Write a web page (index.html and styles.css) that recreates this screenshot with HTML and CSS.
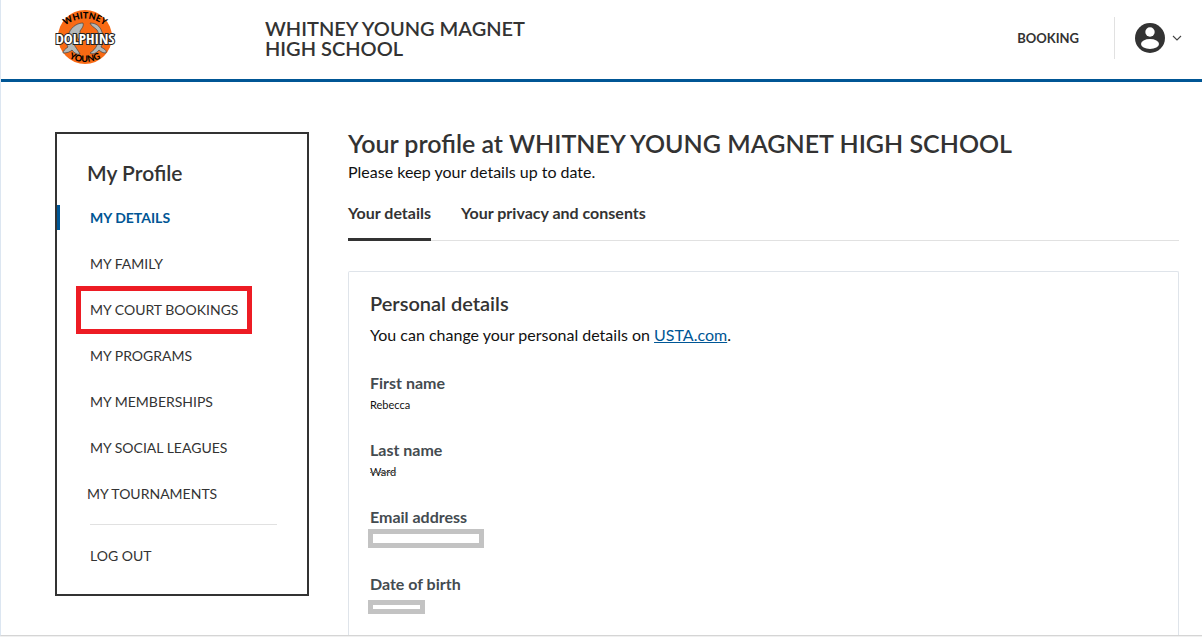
FILE: index.html
```
<!DOCTYPE html>
<html lang="en">
  <head>
    <meta charset="UTF-8" />
    <meta name="viewport" content="width=device-width, initial-scale=1.0" />
    <title>My Profile - Whitney Young Magnet High School</title>
    <link rel="stylesheet" href="styles.css">
  </head>
  <body>
    <div class="page">
      <header class="header">
        <a href="#" class="logo" aria-label="Home">
          <svg width="62" height="58" viewBox="0 0 62 58">
            <defs>
              <path id="arc-top" d="M9 18 Q31 1 53 18" />
              <path id="arc-bottom" d="M11 47 Q31 59 51 47" />
            </defs>
            <circle cx="31" cy="28" r="27" fill="#f96a14" />
            <path class="dolphin" d="M29 14 C24 14 18 17 15 24 C12 29 12 35 14 38 C11 40 9 42 9 44 C13 44 16 43 18 41 C20 44 24 46 26 45 C24 41 21 38 20 35 C20 30 21 27 23 25 C23 29 25 31 26 33 C27 29 26 26 26 22 C28 19 30 17 29 14 Z" />
            <path class="dolphin" d="M36 14 C42 14 46 17 48 23 C50 29 49 34 47 38 C50 40 53 41 52 44 C49 44 47 43 45 41 C43 44 38 46 36 44 C39 42 42 39 43 36 C46 30 45 24 43 21 C40 18 37 17 36 14 Z" />
            <text class="logo-small"><textPath href="#arc-top" startOffset="50%">WHITNEY</textPath></text>
            <text class="logo-name" x="31" y="35">DOLPHINS</text>
            <text class="logo-small"><textPath href="#arc-bottom" startOffset="50%">YOUNG</textPath></text>
          </svg>
        </a>
        <div class="club-name">WHITNEY YOUNG MAGNET HIGH SCHOOL</div>
        <nav class="header-nav">
          <a href="#" class="booking-link">BOOKING</a>
          <button type="button" class="user-menu" aria-label="Account menu">
            <svg width="30" height="30" viewBox="0 0 30 30">
              <circle cx="15" cy="15" r="15" fill="#333" />
              <circle cx="15" cy="9" r="4.7" fill="#fff" />
              <ellipse cx="15" cy="21" rx="9" ry="5" fill="#fff" />
            </svg>
            <svg width="10" height="6" viewBox="0 0 10 6">
              <path d="M1 1 L5 5 L9 1" fill="none" stroke="#444" stroke-width="1.1" />
            </svg>
          </button>
        </nav>
      </header>

      <div class="content">
        <aside class="sidebar">
          <h2 class="sidebar-title">My Profile</h2>
          <ul class="menu">
            <li class="active"><a href="#">MY DETAILS</a></li>
            <li><a href="#">MY FAMILY</a></li>
            <li><a href="#" class="highlight">MY COURT BOOKINGS</a></li>
            <li><a href="#">MY PROGRAMS</a></li>
            <li><a href="#">MY MEMBERSHIPS</a></li>
            <li><a href="#">MY SOCIAL LEAGUES</a></li>
            <li class="outdent"><a href="#">MY TOURNAMENTS</a></li>
          </ul>
          <div class="logout">
            <a href="#">LOG OUT</a>
          </div>
        </aside>

        <main class="main">
          <h1>Your profile at WHITNEY YOUNG MAGNET HIGH SCHOOL</h1>
          <p class="intro">Please keep your details up to date.</p>

          <nav class="tabs">
            <a href="#" class="tab current">Your details</a>
            <a href="#" class="tab">Your privacy and consents</a>
          </nav>

          <section class="card">
            <h3>Personal details</h3>
            <p class="card-text">You can change your personal details on <a href="#">USTA.com</a>.</p>
            <dl class="details">
              <div class="field">
                <dt>First name</dt>
                <dd>Rebecca</dd>
              </div>
              <div class="field">
                <dt>Last name</dt>
                <dd><s>Ward</s></dd>
              </div>
              <div class="field">
                <dt>Email address</dt>
                <dd><span class="redacted email"></span></dd>
              </div>
              <div class="field">
                <dt>Date of birth</dt>
                <dd><span class="redacted birth"></span></dd>
              </div>
            </dl>
          </section>
        </main>
      </div>
    </div>
  </body>
</html>
```
FILE: styles.css
```
:root {
  --dark: #333;
  --blue: #005695;
  --line: #e1e1e1;
  --card-line: #dfe4ea;
}

* {
  box-sizing: border-box;
}

body {
  margin: 0;
  background: #f0f0f0;
  font-family: Lato, "Open Sans", sans-serif;
  color: var(--dark);
}

h1,
h2,
h3,
p,
ul,
dl,
dd {
  margin: 0;
  padding: 0;
}

.page {
  min-height: calc(100vh - 1px);
  margin-bottom: 1px;
  background: #fff;
  border-left: 1px solid #dce6f1;
  border-bottom: 1px solid #d5d5d5;
}

.header {
  display: flex;
  align-items: center;
  height: 82px;
  padding: 0 20px 4px 53px;
  border-bottom: 3px solid var(--blue);
}

.logo {
  width: 211px;
}

.logo svg {
  display: block;
}

.logo-small {
  font: 900 9px Lato, sans-serif;
  text-anchor: middle;
}

.logo-name {
  font: 700 15px "Open Sans Condensed", "DejaVu Sans Condensed", sans-serif;
  fill: #fff;
  stroke: #222;
  stroke-width: 2px;
  paint-order: stroke;
  text-anchor: middle;
}

.dolphin {
  fill: #b3b8b8;
  stroke: #444;
  stroke-width: 0.7px;
}

.club-name {
  width: 280px;
  font-size: 20px;
  line-height: 20px;
  font-weight: 600;
}

.header-nav {
  display: flex;
  align-items: center;
  margin-left: auto;
}

.booking-link {
  margin-right: 35px;
  color: var(--dark);
  font-size: 13px;
  font-weight: 700;
  text-decoration: none;
}

.user-menu {
  display: flex;
  align-items: center;
  gap: 7px;
  height: 42px;
  padding: 0 0 0 20px;
  border: 0;
  border-left: 1px solid var(--line);
  background: none;
  cursor: pointer;
}

.content {
  display: flex;
  align-items: flex-start;
  gap: 39px;
  padding: 0 23px 0 54px;
}

.sidebar {
  flex: 0 0 254px;
  margin-top: 50px;
  padding: 27px 30px 28px;
  border: 2px solid var(--dark);
}

.sidebar-title {
  font-size: 21px;
  line-height: 24px;
  font-weight: 600;
}

.menu {
  display: flex;
  flex-direction: column;
  gap: 26px;
  padding: 23px 0 20px 3px;
  list-style: none;
}

.menu li,
.logout {
  font-size: 14px;
  line-height: 20px;
}

.menu a,
.logout a {
  display: inline-block;
  color: var(--dark);
  text-decoration: none;
}

.menu .active {
  position: relative;
}

.menu .active a {
  color: var(--blue);
  font-weight: 700;
}

.menu .active::before {
  content: "";
  position: absolute;
  top: -3px;
  left: -33px;
  width: 3px;
  height: 25px;
  background: var(--blue);
}

.menu .highlight {
  outline: 5px solid #ed1c24;
  outline-offset: 9px;
}

.menu .outdent {
  margin-left: -3px;
}

.logout {
  margin-left: 3px;
  padding-top: 21px;
  border-top: 1px solid var(--line);
}

.main {
  flex: 1;
  min-width: 0;
  padding-top: 46px;
}

h1 {
  margin-bottom: 2px;
  font-size: 25px;
  line-height: 30px;
  font-weight: 600;
}

.intro {
  font-size: 16px;
  line-height: 24px;
  color: #111;
}

.tabs {
  display: flex;
  gap: 30px;
  margin-top: 17px;
  border-bottom: 1px solid var(--line);
}

.tab {
  padding-bottom: 13px;
  margin-bottom: -1px;
  border-bottom: 3px solid transparent;
  color: var(--dark);
  font-size: 16px;
  line-height: 24px;
  font-weight: 700;
  text-decoration: none;
}

.tab.current {
  border-bottom-color: var(--dark);
}

.card {
  margin-top: 30px;
  padding: 19px 21px 21px;
  border: 1px solid var(--card-line);
  border-bottom: 0;
  border-radius: 2px 2px 0 0;
}

.card h3 {
  font-size: 20px;
  line-height: 24px;
  font-weight: 600;
}

.card-text {
  margin-top: 8px;
  font-size: 16px;
  line-height: 24px;
  color: #111;
}

.card-text a {
  color: var(--blue);
}

.details {
  display: flex;
  flex-direction: column;
  gap: 25px;
  margin-top: 24px;
}

.field dt {
  font-size: 16px;
  line-height: 24px;
  font-weight: 700;
  color: #444b50;
}

.field dd {
  display: flex;
  height: 18px;
  font-size: 11px;
  line-height: 20px;
  color: #111;
}

.field s {
  text-decoration-color: #777;
}

.redacted {
  margin-left: -2px;
  border: 5px solid #c3c3c3;
}

.email {
  width: 116px;
  height: 19px;
}

.birth {
  width: 57px;
  height: 14px;
  margin-top: 4px;
}
```
